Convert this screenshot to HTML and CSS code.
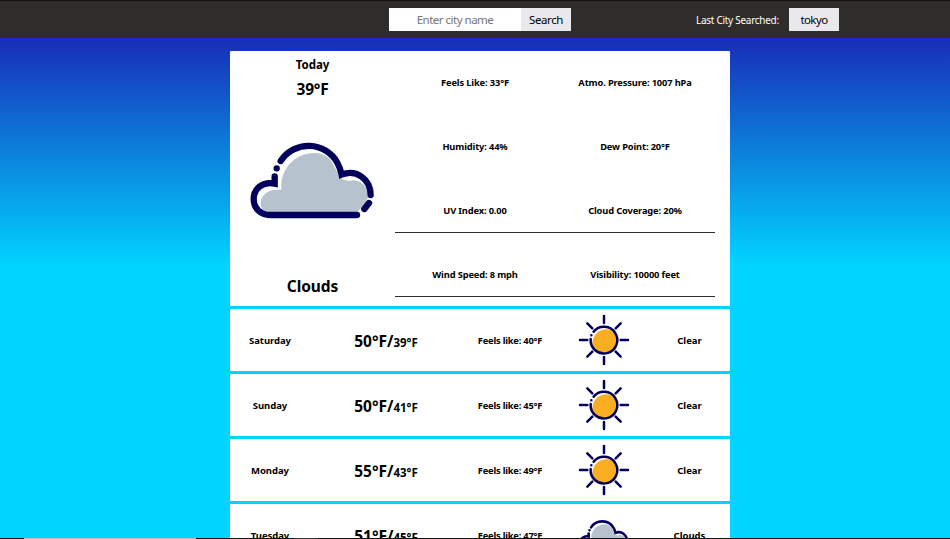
FILE: index.html
```html
<!DOCTYPE html>
<html lang="en">
<head>
<meta charset="utf-8">
<title>Weather Forecast</title>
<link rel="stylesheet" href="styles.css">
</head>
<body>
<svg class="defs" aria-hidden="true">
  <symbol id="cloud" viewBox="-6 0 450 300">
    <path d="M62 220C62 194 88 174 124 180C119 116 166 69 224 69C244 69 258 77 270 87L303 146L326 153C351 145 377 158 388 194C380 214 370 228 354 244L340 254H88C70 246 62 235 62 220Z" fill="#b6c3cf"/>
    <g fill="none" stroke="#03005c" stroke-width="19" stroke-linecap="round">
      <path d="M122 93C163 30 257 34 292 98Q301 114 305 134C349 116 392 148 392 195"/>
      <path d="M104 139V161C68 153 41 177 41 207C41 235 62 255 90 255H351"/>
      <path d="M110 115h.1M387 219L373 237"/>
    </g>
  </symbol>
  <symbol id="sun" viewBox="0 0 156 156">
    <circle cx="78" cy="78" r="41" fill="#fff"/>
    <path d="M43 91C42 58 72 40 99 48C119 64 118 91 103 107C84 124 49 115 43 91Z" fill="#f9ad20"/>
    <g fill="none" stroke="#03005c" stroke-width="7.5" stroke-linecap="round">
      <path d="M47 53A40 40 0 1 1 38 75M40 64h.1"/>
      <path d="M78 6V27M78 129V150M6 78H28M128 78H150M28 28L43 43M113 43L128 28M28 128L43 113M113 113L128 128"/>
    </g>
  </symbol>
</svg>
<div class="window">
  <header class="navbar">
    <form class="search">
      <input class="search-input" type="text" placeholder="Enter city name">
      <button class="button search-button" type="button">Search</button>
    </form>
    <div class="history">
      <span class="history-label">Last City Searched:</span>
      <button class="button history-button" type="button">tokyo</button>
    </div>
  </header>
  <main class="forecast">
    <section class="today">
      <div class="summary">
        <h2 class="today-title">Today</h2>
        <div class="today-temp">39°F</div>
        <svg class="today-icon"><use href="#cloud"/></svg>
        <div class="today-condition">Clouds</div>
      </div>
      <div class="details">
        <div class="detail"><span>Feels Like: 33°F</span></div>
        <div class="detail"><span>Atmo. Pressure: 1007 hPa</span></div>
        <div class="detail"><span>Humidity: 44%</span></div>
        <div class="detail"><span>Dew Point: 20°F</span></div>
        <div class="detail ruled"><span>UV Index: 0.00</span></div>
        <div class="detail ruled"><span>Cloud Coverage: 20%</span></div>
        <div class="detail ruled"><span>Wind Speed: 8 mph</span></div>
        <div class="detail ruled"><span>Visibility: 10000 feet</span></div>
      </div>
    </section>
    <section class="day">
      <span class="name">Saturday</span>
      <span class="temps"><span class="high">50°F/</span><span class="low">39°F</span></span>
      <span class="feels">Feels like: 40°F</span>
      <svg class="sun"><use href="#sun"/></svg>
      <span class="condition">Clear</span>
    </section>
    <section class="day">
      <span class="name">Sunday</span>
      <span class="temps"><span class="high">50°F/</span><span class="low">41°F</span></span>
      <span class="feels">Feels like: 45°F</span>
      <svg class="sun"><use href="#sun"/></svg>
      <span class="condition">Clear</span>
    </section>
    <section class="day">
      <span class="name">Monday</span>
      <span class="temps"><span class="high">55°F/</span><span class="low">43°F</span></span>
      <span class="feels">Feels like: 49°F</span>
      <svg class="sun"><use href="#sun"/></svg>
      <span class="condition">Clear</span>
    </section>
    <section class="day">
      <span class="name">Tuesday</span>
      <span class="temps"><span class="high">51°F/</span><span class="low">45°F</span></span>
      <span class="feels">Feels like: 47°F</span>
      <svg class="cloud"><use href="#cloud"/></svg>
      <span class="condition">Clouds</span>
    </section>
  </main>
  <footer class="edge"></footer>
</div>
</body>
</html>
```
FILE: styles.css
```css
* { box-sizing: border-box; }
body {
  margin: 0;
  overflow: hidden;
  color: #000;
  font-family: "Noto Sans", "Open Sans", sans-serif;
}
.defs { display: none; }
.window {
  display: flex;
  flex-direction: column;
  height: 539px;
  background: #00d5ff;
}
.navbar {
  display: grid;
  grid-template-columns: 389px 307px 1fr;
  flex: none;
  height: 38px;
  padding-top: 7px;
  border-top: 1px solid #111;
  background: #2f2d2b;
}
.search { grid-column: 2; display: flex; height: 23px; }
.search-input {
  width: 132px;
  height: 23px;
  padding: 0;
  border: 0;
  background: #fff;
  font: 11.5px "Noto Sans", sans-serif;
  letter-spacing: -0.5px;
  text-align: center;
}
.search-input::placeholder { color: #757575; opacity: 1; }
.button {
  height: 23px;
  padding: 0;
  border: 0;
  background: #e9e9ed;
  color: #000;
  font: 11.5px/23px "Noto Sans", sans-serif;
}
.search-button { width: 50px; letter-spacing: -0.4px; }
.history { display: flex; align-items: center; height: 23px; }
.history-label {
  width: 93px;
  color: #fff;
  font-size: 10px;
  letter-spacing: -0.28px;
  white-space: nowrap;
}
.history-button { width: 50px; letter-spacing: -0.6px; }
.forecast {
  display: flex;
  flex: 1;
  flex-direction: column;
  gap: 3px;
  min-height: 0;
  overflow: hidden;
  padding: 13px 220px 0 230px;
  background: linear-gradient(#182db8, #00d5ff 229px);
}
.today {
  display: grid;
  grid-template-columns: 165px 320px;
  flex: none;
  height: 255px;
  border-radius: 1px;
  background: #fff;
}
.summary {
  display: flex;
  flex-direction: column;
  align-items: center;
  padding-top: 5px;
  font-weight: 700;
}
.today-title { margin: 0; font-size: 11.5px; line-height: 18px; }
.today-temp { margin-top: 4px; font-size: 15.5px; line-height: 22px; letter-spacing: -0.2px; }
.today-icon { width: 150px; height: 100px; margin-top: 30px; }
.today-condition { margin-top: 44px; font-size: 15.5px; line-height: 24px; letter-spacing: -0.1px; }
.details { display: grid; grid-template-columns: 160px 160px; grid-auto-rows: 64px; }
.detail {
  display: flex;
  align-items: center;
  justify-content: center;
  height: 45px;
  margin-top: 9px;
  border-bottom: 1px solid transparent;
  font-size: 9.3px;
  font-weight: 700;
  letter-spacing: -0.14px;
  white-space: nowrap;
}
.ruled { border-bottom-color: #2f2d2b; }
.day {
  display: grid;
  grid-template-columns: 80px 152px 96px 91px 81px;
  flex: none;
  align-items: center;
  justify-items: center;
  height: 62px;
  border-radius: 1px;
  background: #fff;
  font-size: 9.5px;
  font-weight: 700;
  white-space: nowrap;
}
.name { letter-spacing: -0.05px; }
.temps { display: flex; align-items: baseline; padding-top: 1px; }
.high { font-size: 15.5px; letter-spacing: 0; }
.low { font-size: 11.5px; letter-spacing: 0; }
.feels { font-size: 9.3px; letter-spacing: -0.2px; }
.sun { width: 52px; height: 52px; margin-top: -1px; }
.cloud { width: 60px; height: 40px; }
.edge {
  flex: none;
  height: 1px;
  background: linear-gradient(90deg, #111 24px, #bbb 24px 196px, #111 196px 294px, #333 294px 318px, #111 318px);
}
```
